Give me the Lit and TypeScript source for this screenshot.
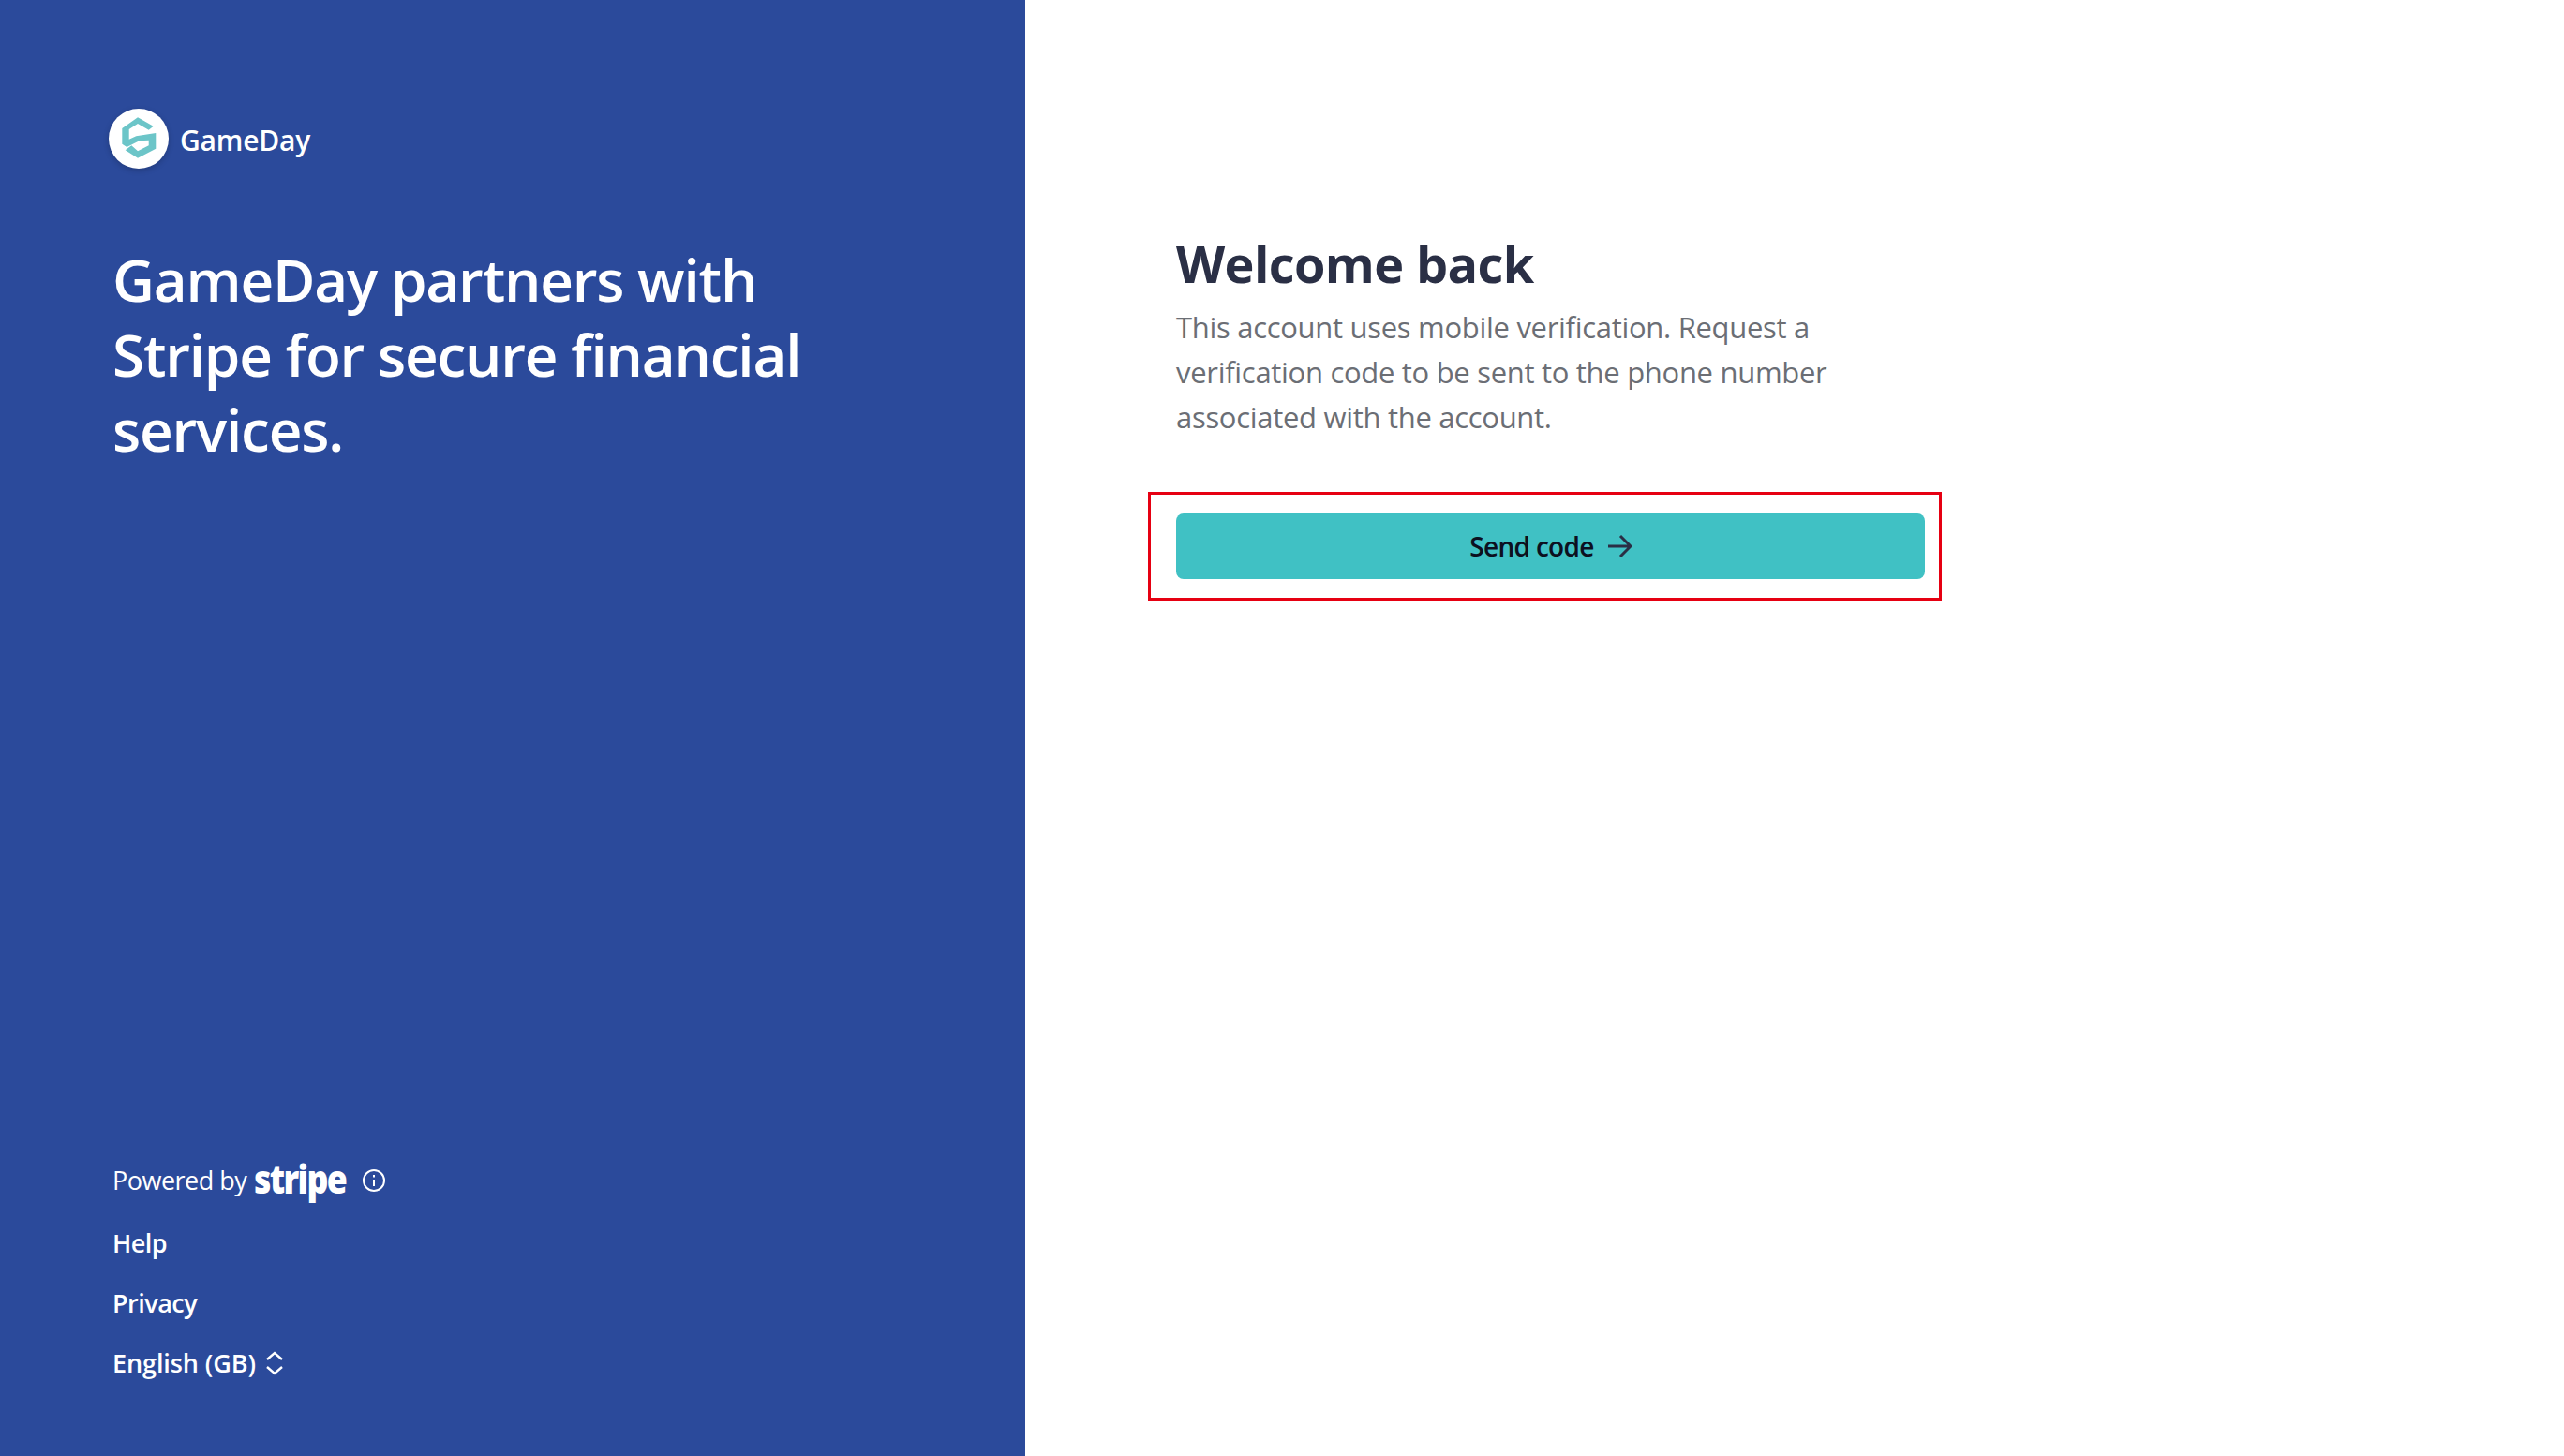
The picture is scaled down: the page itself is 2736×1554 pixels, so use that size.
import { LitElement, html, css } from "lit";
import { customElement } from "lit/decorators.js";

@customElement("app-root")
export class AppRoot extends LitElement {
  static styles = css`
    :host { display: block; font-family: "Open Sans", "Noto Sans", sans-serif; }
    .page { display: grid; grid-template-columns: 1094px 1fr; height: 1554px; background: #fff; }
    .left { background: #2b4a9b; color: #fff; display: flex; flex-direction: column; padding: 116px 0 79px 120px; }
    .brand { display: flex; align-items: center; gap: 12px; margin-left: -4px; height: 64px; }
    .logo { width: 64px; height: 64px; border-radius: 50%; background: #fff; flex: none; box-shadow: 0 2px 6px rgba(0,0,0,.2); }
    .brand-name { font-size: 30px; font-weight: 600; letter-spacing: -0.2px; padding-top: 2px; }
    h1 { margin: 78px 0 0; font-size: 62px; line-height: 80px; font-weight: 600; letter-spacing: -1.2px; width: 780px; }
    .foot { margin-top: auto; display: flex; flex-direction: column; gap: 24px; font-size: 27px; line-height: 40px; font-weight: 600; letter-spacing: -0.5px; }
    .powered { display: flex; align-items: center; font-weight: 400; margin-bottom: 3px; }
    .stripe { display: inline-block; width: 96px; margin-left: 8px; font-size: 42px; line-height: 40px; font-weight: 800; letter-spacing: -2px; transform: scaleX(.85) translateY(-2px); transform-origin: left center; white-space: nowrap; }
    .info { margin-left: 20px; }
    .lang { display: flex; align-items: center; gap: 10px; letter-spacing: -0.1px; }
    .right { padding: 247px 0 0 161px; position: relative; }
    h2 { margin: 0; font-size: 54px; line-height: 68px; font-weight: 700; color: #2a2f45; letter-spacing: -0.6px; }
    p { margin: 10px 0 0; width: 799px; font-size: 31px; line-height: 48px; color: #6b6e75; letter-spacing: -0.3px; }
    .btn { margin-top: 79px; width: 799px; height: 70px; border-radius: 8px; background: #40c1c4; display: flex; align-items: center; justify-content: center; gap: 14px; font-size: 28px; font-weight: 600; letter-spacing: -0.7px; color: #0c1020; }
    .mark { position: absolute; left: 131px; top: 525px; width: 847px; height: 116px; box-sizing: border-box; border: 3px solid #e60012; }
  `;
  render() {
    return html`<div class="page">
      <section class="left">
        <div class="brand">
          <svg class="logo" viewBox="0 0 64 64"><path fill="#6cc5c8" d="M31 9.300 47.700 18.700 42.700 22.700 31 16 21.700 22 21.700 32.700 29.300 29.300 50.300 26 50.300 42.700 31 52.700 17.700 44.300 24.300 39.300 31 45.300 42.700 39.300 42.700 33.700 32.700 34.300 19.300 41 14.300 37.700 14.300 21Z"/></svg>
          <span class="brand-name">GameDay</span>
        </div>
        <h1>GameDay partners with Stripe for secure financial services.</h1>
        <div class="foot">
          <div class="powered">Powered by
            <span class="stripe">stripe</span>
            <svg class="info" width="24" height="24" viewBox="0 0 24 24" fill="none" stroke="#fff" stroke-width="2"><circle cx="12" cy="12" r="11"/><path d="M12 11v7M12 6v2.500"/></svg>
          </div>
          <div>Help</div>
          <div>Privacy</div>
          <div class="lang">English (GB)
            <svg width="20" height="26" viewBox="0 0 20 26" fill="none" stroke="#fff" stroke-width="2.400"><path d="M2 9l8-7 8 7M2 17l8 7 8-7"/></svg>
          </div>
        </div>
      </section>
      <section class="right">
        <h2>Welcome back</h2>
        <p>This account uses mobile verification. Request a verification code to be sent to the phone number associated with the account.</p>
        <div class="btn">Send code
          <svg width="26" height="26" viewBox="0 0 26 26" fill="none" stroke="#2a2f45" stroke-width="3"><path d="M1 13h23M14 2l11 11-11 11"/></svg>
        </div>
        <div class="mark"></div>
      </section>
    </div>`;
  }
}
